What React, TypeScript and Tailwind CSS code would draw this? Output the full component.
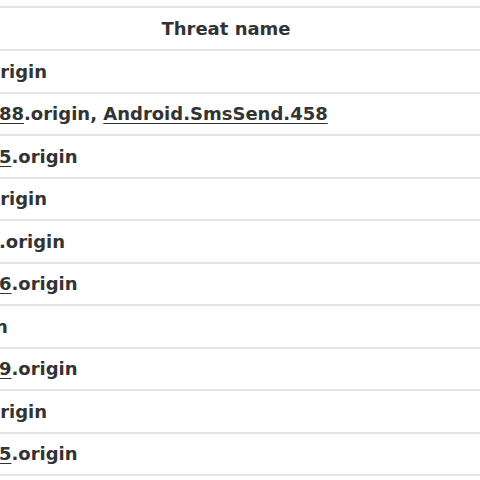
const rows: { link: string; extra?: string }[] = [
  { link: "Android.SmsBots.2" },
  { link: "Android.SmsSend.1888", extra: "Android.SmsSend.458" },
  { link: "Android.SmsSend.445" },
  { link: "Android.SmsBots.7" },
  { link: "Android.SmsSend.62" },
  { link: "Android.SmsSend.316" },
  { link: "Android.Spy.97" },
  { link: "Android.SmsSend.419" },
  { link: "Android.SmsBots.5" },
  { link: "Android.SmsSend.275" },
];

export default function App() {
  return (
    <div className="w-[480px] h-[480px] overflow-hidden bg-white pt-[6px] font-['DejaVu_Sans',Verdana,sans-serif] font-bold text-[18px] text-[#333]">
      <div className="-ml-[223px] w-[898px]">
        <div className="h-[45px] flex items-center justify-center border-y-2 border-[#e4e4e4] box-border">
          Threat name
        </div>
        {rows.map((r, i) => (
          <div key={i} className="h-[42.5px] flex items-center pl-[10px] border-b-2 border-[#e4e4e4] box-border whitespace-nowrap">
            <a className="underline underline-offset-[3px]">{r.link}</a>
            <span>.origin</span>
            {r.extra && (
              <>
                <span>,&nbsp;</span>
                <a className="underline underline-offset-[3px]">{r.extra}</a>
              </>
            )}
          </div>
        ))}
      </div>
    </div>
  );
}
